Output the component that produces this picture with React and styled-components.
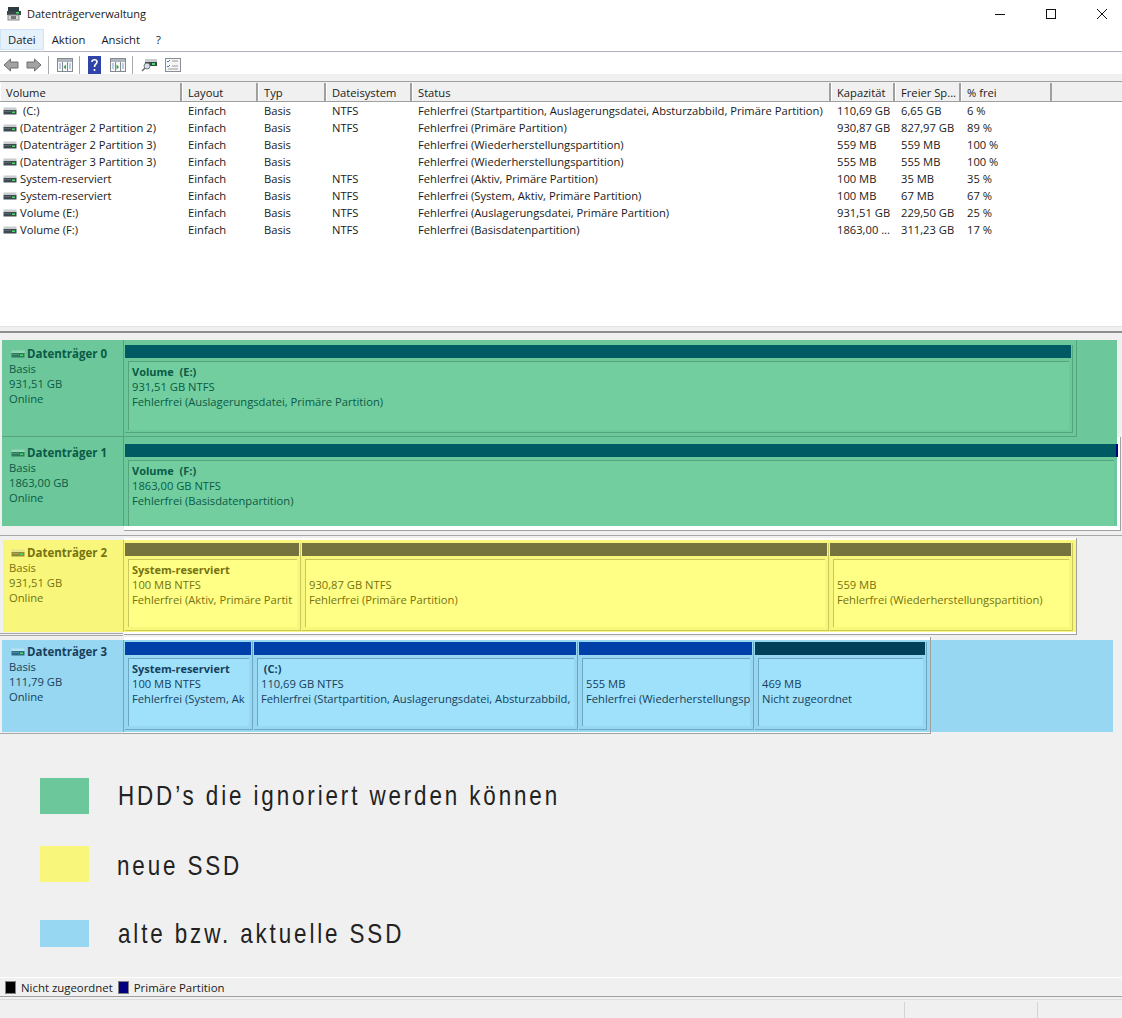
import React from "react";
import styled, { createGlobalStyle } from "styled-components";

const Global = createGlobalStyle`
  html, body { margin: 0; padding: 0; background: #f0f0f0; }
  body { font-family: "Open Sans", "Noto Sans", sans-serif; font-size: 11.2px; color: #1a1a1a; }
  * { box-sizing: border-box; }
`;

const Page = styled.div`
  width: 1122px;
  height: 1018px;
  overflow: hidden;
  display: flex;
  flex-direction: column;
`;

const TitleBar = styled.div`
  height: 28px;
  background: #fff;
  display: flex;
  align-items: center;
  padding: 0 0 1px 6px;
  gap: 5px;
  font-size: 11px;
`;
const TitleText = styled.span`
  flex: 1;
`;
const WinButton = styled.div`
  width: 46px;
  height: 27px;
  display: flex;
  align-items: center;
  justify-content: center;
  margin-right: ${(p) => p.$mr || 0}px;
`;

const MenuBar = styled.div`
  height: 24px;
  background: #fff;
  border-bottom: 1px solid #b0b3bb;
  display: flex;
  font-size: 11.3px;
  padding-top: 1px;
`;
const MenuItem = styled.div`
  height: 21px;
  padding: 0 7px;
  display: flex;
  align-items: center;
  background: ${(p) => (p.$active ? "#e5f1fb" : "transparent")};
  border: 1px solid ${(p) => (p.$active ? "#cfe4f7" : "transparent")};
`;

const Toolbar = styled.div`
  height: 22px;
  background: #fff;
  display: flex;
  align-items: center;
  padding: 3px 0 0 3px;
`;
const ToolSep = styled.div`
  width: 1px;
  height: 18px;
  background: #a9a9a9;
  margin: 0 8px 0 6px;
`;
const ToolIcon = styled.svg`
  display: block;
  margin-right: ${(p) => p.$mr || 0}px;
`;

const Band = styled.div`
  height: 8px;
  background: #f0f0f0;
  border-bottom: 1px solid #a0a0a0;
`;

const Table = styled.div`
  height: 244px;
  background: #fff;
`;
const HeadRow = styled.div`
  display: flex;
  height: 20px;
  padding-top: 1px;
  background: #f0f0f0;
  border-bottom: 1px solid #a0a0a0;
`;
const HeadCell = styled.div`
  width: ${(p) => p.$w}px;
  padding-left: 5px;
  border-right: 2px solid #a0a0a0;
  border-left: 1px solid #fff;
  display: flex;
  align-items: center;
  white-space: nowrap;
  overflow: hidden;
`;
const Row = styled.div`
  display: flex;
  height: 17px;
  align-items: center;
`;
const Cell = styled.div`
  width: ${(p) => p.$w}px;
  padding-left: 6px;
  white-space: nowrap;
  overflow: hidden;
`;
const VolumeCell = styled(Cell)`
  display: flex;
  align-items: center;
  padding-left: 3px;
  gap: 3px;
`;

const Splitter = styled.div`
  height: 7px;
  background: #f0f0f0;
  border-top: 1px solid #e4e4e4;
  border-bottom: 2px solid #8e8e8e;
`;

const DiskArea = styled.div`
  height: 644px;
  background: #f0f0f0;
  display: flex;
  flex-direction: column;
`;

const DiskRow = styled.div`
  display: flex;
  align-items: flex-start;
  width: ${(p) => p.$w}px;
  height: ${(p) => p.$h}px;
  margin-top: ${(p) => p.$mt}px;
  margin-left: ${(p) => p.$ml}px;
  background: ${(p) => p.$bg};
  flex-shrink: 0;
`;
const DiskLabel = styled.div`
  width: ${(p) => p.$w}px;
  height: 100%;
  flex-shrink: 0;
  padding: ${(p) => p.$pt}px 0 0 ${(p) => p.$pl}px;
  line-height: 15px;
  color: ${(p) => p.$fg};
  border-right: 1px solid ${(p) => p.$line};
  border-bottom: ${(p) => (p.$ruled ? `1px solid ${p.$line}` : "none")};
`;
const DiskName = styled.div`
  display: flex;
  align-items: center;
  gap: 2px;
  font-weight: 700;
  font-size: 11.5px;
  margin-left: 2px;
`;
const OuterFrame = styled.div`
  display: flex;
  align-items: flex-start;
  margin-top: -${(p) => p.$top}px;
  padding-top: ${(p) => p.$top}px;
  padding-right: ${(p) => p.$pr}px;
  height: ${(p) => p.$h}px;
  background: ${(p) => p.$bg};
  border-right: 1px solid ${(p) => p.$line};
  border-bottom: 1px solid ${(p) => p.$line};
`;
const Tracks = styled.div`
  display: flex;
  height: ${(p) => p.$h}px;
  padding: ${(p) => p.$pt}px ${(p) => p.$pr}px ${(p) => p.$pb}px 1px;
  background: ${(p) => p.$bg};
`;
const Partition = styled.div`
  display: flex;
  flex-direction: column;
  flex-shrink: 0;
  box-sizing: content-box;
  width: ${(p) => p.$w}px;
  padding-right: 1px;
  border-right: ${(p) => (p.$bare ? "none" : `1px solid ${p.$line}`)};
  border-bottom: ${(p) => (p.$bare ? "none" : `1px solid ${p.$line}`)};
  margin-right: ${(p) => (p.$last ? 0 : 1)}px;
`;
const Strip = styled.div`
  position: relative;
  height: 13px;
  flex-shrink: 0;
  background: ${(p) => p.$color};
`;
const StripTail = styled.div`
  position: absolute;
  top: 0;
  bottom: 0;
  right: -2px;
  width: 2px;
  background: #000080;
`;
const Body = styled.div`
  flex: 1;
  margin: 3px 2px ${(p) => p.$mb}px 3px;
  padding: 2px 0 0 3px;
  background: ${(p) => p.$bg};
  color: ${(p) => p.$fg};
  border-top: 1px solid ${(p) => p.$line};
  border-left: 1px solid ${(p) => p.$line};
  line-height: 15px;
  white-space: nowrap;
  overflow: hidden;
`;
const Bold = styled.div`
  font-weight: 700;
  font-size: 11px;
  min-height: 15px;
  white-space: pre;
`;
const Rule = styled.div`
  height: 1px;
  width: ${(p) => p.$w || 1122}px;
  background: #a8a8a8;
  margin-top: ${(p) => p.$mt}px;
  flex-shrink: 0;
`;

const Legend = styled.div`
  flex: 1;
  display: flex;
  flex-direction: column;
  padding: 44px 0 0 40px;
`;
const LegendRow = styled.div`
  display: flex;
  align-items: center;
  height: ${(p) => p.$h}px;
  margin-bottom: ${(p) => p.$mb}px;
`;
const Swatch = styled.div`
  width: 49px;
  height: 100%;
  background: ${(p) => p.$color};
`;
const LegendText = styled.div`
  margin-left: ${(p) => p.$ml}px;
  padding-top: ${(p) => p.$pt || 0}px;
  font-family: "Liberation Sans", Arial, sans-serif;
  font-size: 28px;
  letter-spacing: 3.6px;
  color: #222;
  white-space: nowrap;
  transform: scaleX(0.8);
  transform-origin: left center;
`;

const KeyBar = styled.div`
  height: 20px;
  flex-shrink: 0;
  border-top: 1px solid #fff;
  border-bottom: 1px solid #a0a0a0;
  display: flex;
  align-items: center;
  padding-left: 5px;
  font-size: 11.4px;
`;
const KeySwatch = styled.div`
  width: 11px;
  height: 13px;
  background: ${(p) => p.$color};
  border: 1px solid #808080;
  margin-right: 5px;
`;
const KeyLabel = styled.div`
  margin-right: 5px;
`;
const StatusBar = styled.div`
  flex: 1;
  margin-top: 2px;
  padding-top: 2px;
  border-top: 1px solid #dcdcdc;
  background: #f0f0f0;
  display: flex;
  justify-content: flex-end;
`;
const StatusCell = styled.div`
  width: ${(p) => p.$w}px;
  border-left: 1px solid #d4d4d4;
`;

const DriveIcon = ({ top = "#c8ccce", dark = "#3c4a50", light = "#5c6a70" }) => (
  <svg width="14" height="8" viewBox="0 0 14 8">
    <rect x="0.5" y="0.5" width="13" height="3" fill={top} />
    <rect x="0.5" y="3" width="13" height="4.5" fill={dark} />
    <rect x="9" y="4.5" width="3" height="1.5" fill="#45e060" />
    <rect x="1" y="4" width="7" height="1" fill={light} />
  </svg>
);

const PaneIcon = ({ points }) => (
  <ToolIcon width="16" height="14" viewBox="0 0 16 14">
    <rect x="0.5" y="0.5" width="15" height="13" fill="#f6f7f8" stroke="#858a90" />
    <rect x="1" y="1" width="14" height="3" fill="#aeb5bc" />
    <path d="M5.500 4v9M10.500 4v9" stroke="#858a90" />
    <path d="M2 6h2M2 8h2M2 10h2M12 6h2M12 8h2M12 10h2" stroke="#7ea4d0" />
    <path d={points} fill="#2fa64a" />
  </ToolIcon>
);

const columns = [
  { name: "Volume", w: 182 },
  { name: "Layout", w: 76 },
  { name: "Typ", w: 68 },
  { name: "Dateisystem", w: 86 },
  { name: "Status", w: 419 },
  { name: "Kapazität", w: 64 },
  { name: "Freier Sp...", w: 66 },
  { name: "% frei", w: 91 },
];

const volumes = [
  ["\u00a0(C:)", "Einfach", "Basis", "NTFS", "Fehlerfrei (Startpartition, Auslagerungsdatei, Absturzabbild, Primäre Partition)", "110,69 GB", "6,65 GB", "6 %"],
  ["(Datenträger 2 Partition 2)", "Einfach", "Basis", "NTFS", "Fehlerfrei (Primäre Partition)", "930,87 GB", "827,97 GB", "89 %"],
  ["(Datenträger 2 Partition 3)", "Einfach", "Basis", "", "Fehlerfrei (Wiederherstellungspartition)", "559 MB", "559 MB", "100 %"],
  ["(Datenträger 3 Partition 3)", "Einfach", "Basis", "", "Fehlerfrei (Wiederherstellungspartition)", "555 MB", "555 MB", "100 %"],
  ["System-reserviert", "Einfach", "Basis", "NTFS", "Fehlerfrei (Aktiv, Primäre Partition)", "100 MB", "35 MB", "35 %"],
  ["System-reserviert", "Einfach", "Basis", "NTFS", "Fehlerfrei (System, Aktiv, Primäre Partition)", "100 MB", "67 MB", "67 %"],
  ["Volume (E:)", "Einfach", "Basis", "NTFS", "Fehlerfrei (Auslagerungsdatei, Primäre Partition)", "931,51 GB", "229,50 GB", "25 %"],
  ["Volume (F:)", "Einfach", "Basis", "NTFS", "Fehlerfrei (Basisdatenpartition)", "1863,00 ...", "311,23 GB", "17 %"],
];

const green = { label: "#6cc89a", body: "#72ce9f", fg: "#0a5a46", line: "#54a47e", strip: "#005a64", iconTop: "#8fd8b4", iconDark: "#2f7a5c", iconLight: "#4a9272" };
const yellow = { label: "#f8f77c", body: "#ffff85", fg: "#75720f", line: "#c9c85c", strip: "#75743f", iconTop: "#e4e48a", iconDark: "#8c8c3c", iconLight: "#a4a450" };
const blue = { label: "#97d7f2", body: "#9fe0fb", fg: "#17405a", line: "#6ba7c2", strip: "#0040a8", iconTop: "#b8e4f6", iconDark: "#2f6a86", iconLight: "#4a86a2" };

const disk0 = {
  name: "Datenträger 0", size: "931,51 GB", theme: green, ml: 2, w: 1115, h: 97, mt: 7, lw: 122, lpt: 6, lpl: 7, ruled: true,
  trackH: 96, frameH: 97, top: 0, framePr: 0, trackPr: 3, frameLine: green.line, frameBg: "transparent", pt: 5, pb: 3, mb: 2,
  parts: [{ w: 946, title: "Volume  (E:)", lines: ["931,51 GB NTFS", "Fehlerfrei (Auslagerungsdatei, Primäre Partition)"], last: true }],
};
const disk1 = {
  name: "Datenträger 1", size: "1863,00 GB", theme: green, ml: 2, w: 1115, h: 89, mt: 0, lw: 122, lpt: 8, lpl: 7,
  trackH: 89, frameH: 94, top: 0, framePr: 3, trackPr: 0, frameLine: "#a0a0a0", frameBg: "#fff", pt: 7, pb: 0, mb: 0,
  parts: [{ w: 991, title: "Volume  (F:)", lines: ["1863,00 GB NTFS", "Fehlerfrei (Basisdatenpartition)"], last: true, bare: true, tail: true }],
};
const disk2 = {
  name: "Datenträger 2", size: "931,51 GB", theme: yellow, ml: 3, w: 1073, h: 92, mt: 4, lw: 121, lpt: 5, lpl: 6,
  trackH: 92, frameH: 97, top: 2, framePr: 0, trackPr: 3, frameLine: "#a0a0a0", frameBg: "#fff", pt: 3, pb: 1, mb: 3,
  parts: [
    { w: 174, title: "System-reserviert", lines: ["100 MB NTFS", "Fehlerfrei (Aktiv, Primäre Partit"] },
    { w: 525, title: "", lines: ["930,87 GB NTFS", "Fehlerfrei (Primäre Partition)"] },
    { w: 241, title: "", lines: ["559 MB", "Fehlerfrei (Wiederherstellungspartition)"], last: true },
  ],
};
const disk3 = {
  name: "Datenträger 3", size: "111,79 GB", theme: blue, ml: 2, w: 1111, h: 92, mt: 4, lw: 122, lpt: 4, lpl: 7,
  trackH: 92, frameH: 97, top: 3, framePr: 0, trackPr: 3, frameLine: "#a0a0a0", frameBg: "#fff", pt: 2, pb: 2, mb: 3,
  parts: [
    { w: 126, title: "System-reserviert", lines: ["100 MB NTFS", "Fehlerfrei (System, Ak"] },
    { w: 322, title: "\u00a0(C:)", lines: ["110,69 GB NTFS", "Fehlerfrei (Startpartition, Auslagerungsdatei, Absturzabbild,"] },
    { w: 173, title: "", lines: ["555 MB", "Fehlerfrei (Wiederherstellungsp"] },
    { w: 170, title: "", lines: ["469 MB", "Nicht zugeordnet"], strip: "#004059", last: true },
  ],
};

function Disk({ disk }) {
  const t = disk.theme;
  return (
    <DiskRow $w={disk.w} $h={disk.h} $mt={disk.mt} $ml={disk.ml} $bg={t.label}>
      <DiskLabel $w={disk.lw} $pt={disk.lpt} $pl={disk.lpl} $fg={t.fg} $line={t.line} $ruled={disk.ruled}>
        <DiskName>
          <DriveIcon top={t.iconTop} dark={t.iconDark} light={t.iconLight} />
          {disk.name}
        </DiskName>
        <div>Basis</div>
        <div>{disk.size}</div>
        <div>Online</div>
      </DiskLabel>
      <OuterFrame $top={disk.top} $h={disk.frameH} $pr={disk.framePr} $bg={disk.frameBg} $line={disk.frameLine}>
        <Tracks $h={disk.trackH} $pt={disk.pt} $pb={disk.pb} $pr={disk.trackPr} $bg={t.label}>
          {disk.parts.map((p, i) => (
            <Partition key={i} $w={p.w} $last={p.last} $bare={p.bare} $line={t.line}>
              <Strip $color={p.strip || t.strip}>{p.tail && <StripTail />}</Strip>
              <Body $bg={t.body} $fg={t.fg} $line={t.line} $mb={disk.mb}>
                <Bold>{p.title}</Bold>
                {p.lines.map((l) => (
                  <div key={l}>{l}</div>
                ))}
              </Body>
            </Partition>
          ))}
        </Tracks>
      </OuterFrame>
    </DiskRow>
  );
}

export default function App() {
  return (
    <Page>
      <Global />
      <TitleBar>
        <svg width="16" height="16" viewBox="0 0 16 16">
          <rect x="2" y="1" width="11" height="5" fill="#2d3a40" />
          <rect x="1" y="5" width="14" height="4" fill="#39464c" />
          <rect x="10" y="6" width="3" height="1.5" fill="#45e060" />
          <rect x="2" y="9" width="11" height="5" fill="#d4d4d4" stroke="#8a8a8a" />
          <rect x="5" y="10" width="5" height="3" fill="#777" />
        </svg>
        <TitleText>Datenträgerverwaltung</TitleText>
        <WinButton>
          <svg width="10" height="10"><rect x="0" y="5" width="10" height="1" fill="#111" /></svg>
        </WinButton>
        <WinButton>
          <svg width="10" height="10"><rect x="0.5" y="0.5" width="9" height="9" fill="none" stroke="#111" /></svg>
        </WinButton>
        <WinButton $mr={-3}>
          <svg width="10" height="10"><path d="M0 0L10 10M10 0L0 10" stroke="#111" /></svg>
        </WinButton>
      </TitleBar>
      <MenuBar>
        <MenuItem $active>Datei</MenuItem>
        <MenuItem>Aktion</MenuItem>
        <MenuItem>Ansicht</MenuItem>
        <MenuItem>?</MenuItem>
      </MenuBar>
      <Toolbar>
        <ToolIcon width="16" height="14" viewBox="0 0 16 14" $mr={7}>
          <path d="M7.500 1L1 7l6.500 6v-3H15V4H7.500z" fill="#a3a3a3" stroke="#6f6f6f" />
        </ToolIcon>
        <ToolIcon width="16" height="14" viewBox="0 0 16 14">
          <path d="M8.500 1L15 7l-6.500 6v-3H1V4h7.500z" fill="#a3a3a3" stroke="#6f6f6f" />
        </ToolIcon>
        <ToolSep />
        <PaneIcon points="M9 6.500v5L6.500 9z" />
        <ToolSep />
        <ToolIcon width="13" height="18" viewBox="0 0 13 18" $mr={9}>
          <rect width="13" height="18" fill="#2f44a8" />
          <path d="M4 6c0-3 5-3 5 0 0 2-2.500 2-2.500 5M6.500 13v2" stroke="#fff" strokeWidth="1.600" fill="none" />
        </ToolIcon>
        <PaneIcon points="M6.500 6.500v5L9 9z" />
        <ToolSep />
        <ToolIcon width="16" height="14" viewBox="0 0 16 14" $mr={8}>
          <rect x="4" y="1" width="12" height="3" fill="#c8ccce" />
          <rect x="4" y="4" width="12" height="4" fill="#39464c" />
          <rect x="11" y="5" width="3" height="2" fill="#45e060" />
          <circle cx="6" cy="8" r="3" fill="#cfe0ea" stroke="#777" />
          <path d="M4 10l-3 3" stroke="#6a6a6a" strokeWidth="1.500" />
        </ToolIcon>
        <ToolIcon width="16" height="14" viewBox="0 0 16 14">
          <rect x="0.5" y="0.5" width="15" height="13" fill="#f6f6f6" stroke="#8a8f96" />
          <path d="M2 3l1 1 2-2M2 8l1 1 2-2" stroke="#3b7bd0" fill="none" />
          <path d="M7 3h6M7 8h6M3 11h10" stroke="#9a9a9a" />
        </ToolIcon>
      </Toolbar>
      <Band />
      <Table>
        <HeadRow>
          {columns.map((c) => (
            <HeadCell key={c.name} $w={c.w}>{c.name}</HeadCell>
          ))}
        </HeadRow>
        {volumes.map((v, i) => (
          <Row key={i}>
            <VolumeCell $w={columns[0].w}>
              <DriveIcon />
              <span>{v[0]}</span>
            </VolumeCell>
            {v.slice(1).map((text, j) => (
              <Cell key={j} $w={columns[j + 1].w}>{text}</Cell>
            ))}
          </Row>
        ))}
      </Table>
      <Splitter />
      <DiskArea>
        <Disk disk={disk0} />
        <Disk disk={disk1} />
        <Rule $mt={9} />
        <Disk disk={disk2} />
        <Rule $mt={1} $w={123} />
        <Rule $mt={1} $w={123} />
        <Disk disk={disk3} />
        <Rule $mt={1} $w={124} />
        <Legend>
          <LegendRow $h={36} $mb={32}>
            <Swatch $color="#6cc89a" />
            <LegendText $ml={29}>HDD’s die ignoriert werden können</LegendText>
          </LegendRow>
          <LegendRow $h={36} $mb={38}>
            <Swatch $color="#f8f77c" />
            <LegendText $ml={28} $pt={4}>neue SSD</LegendText>
          </LegendRow>
          <LegendRow $h={27} $mb={0}>
            <Swatch $color="#97d7f2" />
            <LegendText $ml={29}>alte bzw. aktuelle SSD</LegendText>
          </LegendRow>
        </Legend>
      </DiskArea>
      <KeyBar>
        <KeySwatch $color="#000" />
        <KeyLabel>Nicht zugeordnet</KeyLabel>
        <KeySwatch $color="#000080" />
        <KeyLabel>Primäre Partition</KeyLabel>
      </KeyBar>
      <StatusBar>
        <StatusCell $w={133} />
        <StatusCell $w={85} />
      </StatusBar>
    </Page>
  );
}
